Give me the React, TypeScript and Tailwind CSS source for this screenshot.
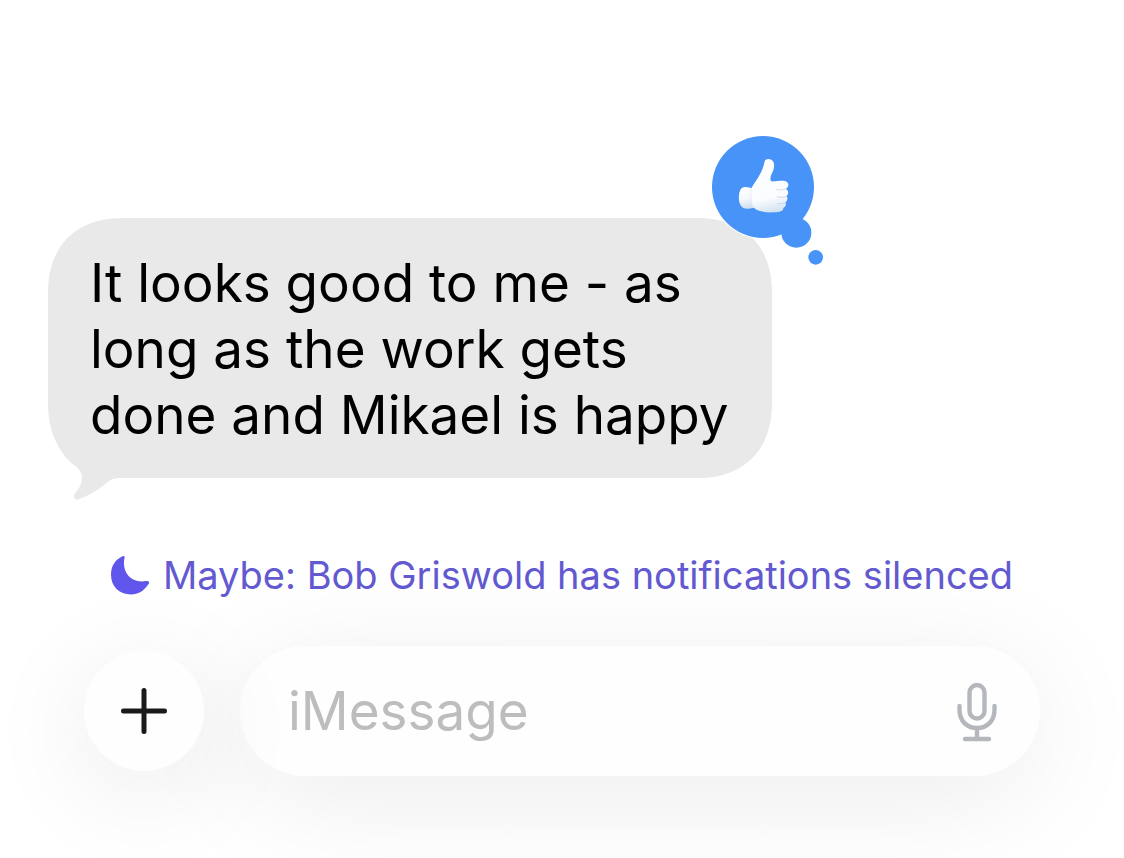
const LikeReaction = () => (
  <svg
    role="img"
    aria-label="Liked"
    viewBox="54 36 360 408"
    className="absolute -top-[86px] -right-[56px] h-[136px] w-[120px]"
  >
    <defs>
      <linearGradient id="hand" x1="0.3" y1="0" x2="0.45" y2="1">
        <stop offset="0" stopColor="#ffffff" />
        <stop offset="0.75" stopColor="#fafcfe" />
        <stop offset="1" stopColor="#d6e4f2" />
      </linearGradient>
      <linearGradient id="cuff" x1="0" y1="0" x2="0.2" y2="1">
        <stop offset="0" stopColor="#ffffff" />
        <stop offset="0.6" stopColor="#f4f8fc" />
        <stop offset="1" stopColor="#d3e2f2" />
      </linearGradient>
    </defs>
    <circle cx="219" cy="201" r="156" fill="#fff" />
    <g fill="#4893f7">
      <circle cx="219" cy="201" r="153" />
      <circle cx="319" cy="338" r="45" />
      <circle cx="377" cy="412" r="22" />
    </g>
    <path
      d="M166 201C174 201 182 203 190 208L196 262C184 267 168 267 160 264C148 257 144 237 148 218C151 206 157 201 166 201Z"
      fill="url(#cuff)"
    />
    <path
      d="M224 124C228 114 242 115 249 124C255 133 252 148 246 160C241 170 240 177 243 184C254 185 266 182 279 182C290 182 296 188 295 196C294 202 291 205 287 207C296 210 297 221 290 228C294 234 292 243 286 247C290 254 286 261 280 264C281 273 270 277 252 277C229 278 204 275 191 263C182 250 180 222 184 205C192 188 218 160 224 124Z"
      fill="url(#hand)"
    />
    <path
      d="M286 207C277 211 268 211 260 208M289 229C280 233 270 233 262 230M285 248C278 252 269 252 262 250"
      fill="none"
      stroke="#c6d5e5"
      strokeWidth="2.5"
      strokeLinecap="round"
    />
    <path
      d="M184 208C180 224 182 249 192 262"
      fill="none"
      stroke="#e6edf5"
      strokeWidth="3"
      strokeLinecap="round"
    />
  </svg>
)

const MessageBubble = () => (
  <div className="relative w-fit rounded-[76px] bg-[#e9e9e9] px-[42px] pt-[32px] pb-[30px] [corner-shape:superellipse(1.2)]">
    <p className="max-w-[640px] text-[53px] leading-[66px] text-black">
      It looks good to me - as long as the work gets done and Mikael is happy
    </p>
    <svg
      aria-hidden="true"
      viewBox="0 0 90 80"
      className="absolute -bottom-[22px] left-0 h-[80px] w-[90px]"
    >
      <path
        d="M8 20C14 34 18 39 26 45C34 51 36 57 32 66C30 71 26 73 26 76C26 79 28 81 31 79C40 76 50 70 57 64C62 60 65 58 72 58L80 40Z"
        fill="#e9e9e9"
      />
    </svg>
    <LikeReaction />
  </div>
)

const SilencedNotice = () => (
  <div className="flex items-center justify-center gap-[14px] text-[#6359d0]">
    <svg
      aria-hidden="true"
      viewBox="0 0 38 40"
      className="h-[40px] w-[38px] shrink-0"
    >
      <path
        d="M11 1.500C13 0.500 14 1 13.600 2.500C10.500 15 18 29 35 26C38 25.500 39 27 37.500 29C33 36 27 39.500 20 39.500C8 39.500 0 31 0 20C0 11 4 5 11 1.500Z"
        fill="#6156eb"
      />
    </svg>
    <p className="text-[38px] leading-[48px]">
      Maybe: Bob Griswold has notifications silenced
    </p>
  </div>
)

const Composer = () => (
  <form
    className="flex items-center gap-[36px]"
    onSubmit={(e) => e.preventDefault()}
  >
    <button
      type="button"
      aria-label="Add attachment"
      className="relative z-10 flex size-[120px] shrink-0 items-center justify-center rounded-full bg-[#fefefe] shadow-[0_20px_110px_rgba(0,0,0,0.09)]"
    >
      <svg
        aria-hidden="true"
        viewBox="0 0 46 46"
        className="size-[46px]"
        stroke="#1a1a1a"
        strokeWidth="5"
        strokeLinecap="round"
      >
        <path d="M23 2.500V43.500M2.500 23H43.500" />
      </svg>
    </button>
    <div className="flex h-[130px] min-w-0 flex-1 items-center rounded-[65px] bg-[#fefefe] pr-[42px] pl-[48px] shadow-[0_20px_120px_rgba(0,0,0,0.08)]">
      <input
        type="text"
        aria-label="Message"
        placeholder="iMessage"
        className="h-[72px] min-w-0 flex-1 bg-transparent text-[53px] leading-[66px] text-black outline-none placeholder:text-[#bdbdbd]"
      />
      <button type="button" aria-label="Dictate" className="shrink-0">
        <svg
          aria-hidden="true"
          viewBox="0 0 42 62"
          className="h-[62px] w-[42px]"
          fill="none"
          stroke="#b4b8bd"
          strokeWidth="4.4"
          strokeLinecap="round"
        >
          <rect x="13.5" y="5" width="15" height="33.5" rx="7.5" />
          <path d="M3.500 26V30C3.500 41 11 48 21 48C31 48 38.500 41 38.500 30V26M21 48V59M9 59H33" />
        </svg>
      </button>
    </div>
  </form>
)

const App = () => (
  <main className="min-h-svh overflow-hidden bg-white pt-[218px] font-['Inter',sans-serif]">
    <section className="px-[48px]">
      <MessageBubble />
    </section>
    <footer className="mt-[73px] flex flex-col gap-[47px] px-[84px] pb-[82px]">
      <SilencedNotice />
      <Composer />
    </footer>
  </main>
)

export default App
